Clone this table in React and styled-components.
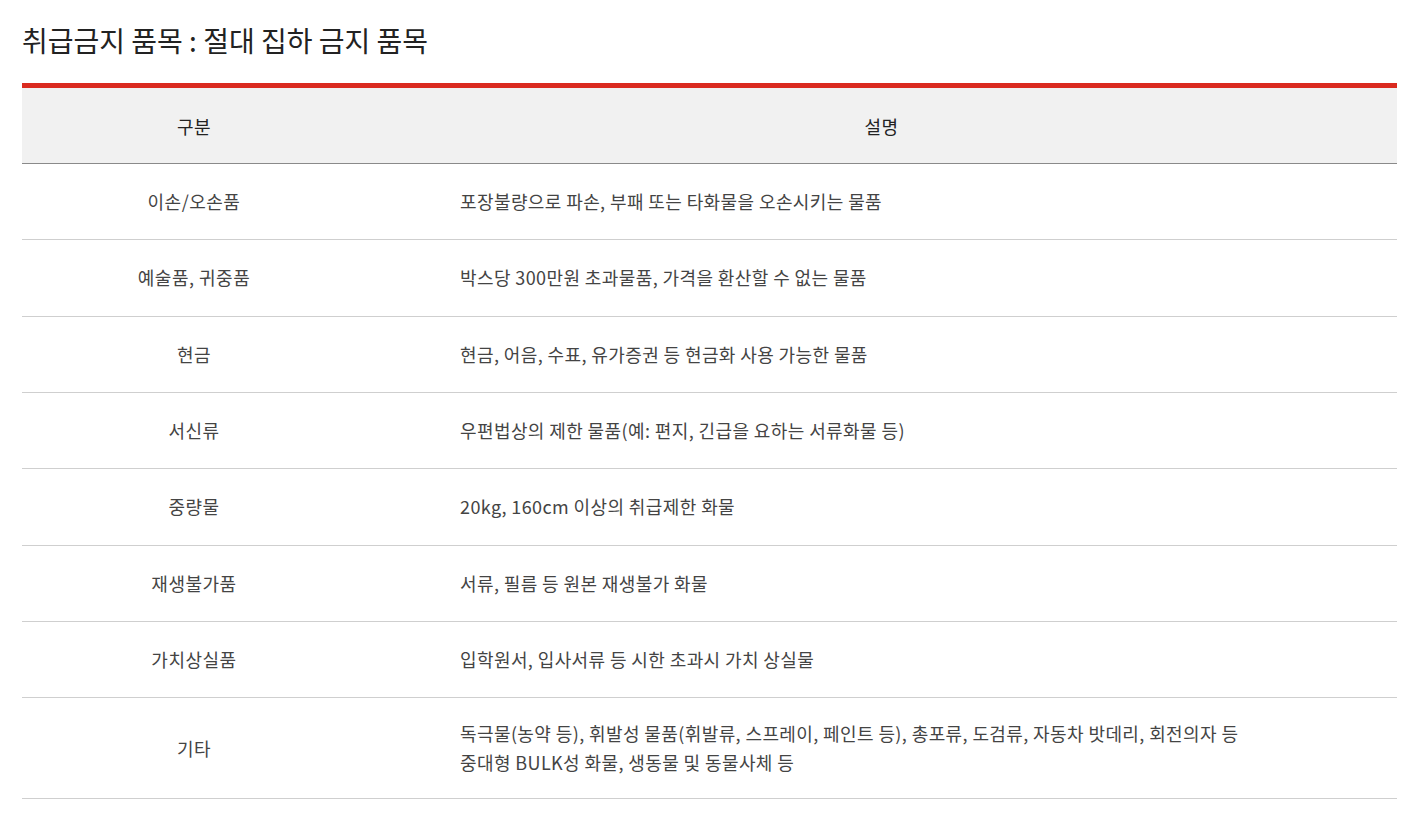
import React from 'react';
import styled, { createGlobalStyle } from 'styled-components';

const rows = [
  { name: '이손/오손품', desc: ['포장불량으로 파손, 부패 또는 타화물을 오손시키는 물품'] },
  { name: '예술품, 귀중품', desc: ['박스당 300만원 초과물품, 가격을 환산할 수 없는 물품'] },
  { name: '현금', desc: ['현금, 어음, 수표, 유가증권 등 현금화 사용 가능한 물품'] },
  { name: '서신류', desc: ['우편법상의 제한 물품(예: 편지, 긴급을 요하는 서류화물 등)'] },
  { name: '중량물', desc: ['20kg, 160cm 이상의 취급제한 화물'] },
  { name: '재생불가품', desc: ['서류, 필름 등 원본 재생불가 화물'] },
  { name: '가치상실품', desc: ['입학원서, 입사서류 등 시한 초과시 가치 상실물'] },
  {
    name: '기타',
    desc: [
      '독극물(농약 등), 휘발성 물품(휘발류, 스프레이, 페인트 등), 총포류, 도검류, 자동차 밧데리, 회전의자 등',
      '중대형 BULK성 화물, 생동물 및 동물사체 등',
    ],
  },
];

const App = () => {
  return (
    <>
      <GlobalStyle />
      <Wrapper>
        <Title>취급금지 품목 : 절대 집하 금지 품목</Title>
        <Table>
          <colgroup>
            <col style={{ width: '344px' }} />
            <col />
          </colgroup>
          <thead>
            <tr>
              <HeadCell>구분</HeadCell>
              <HeadCell>설명</HeadCell>
            </tr>
          </thead>
          <tbody>
            {rows.map((row) => (
              <tr key={row.name}>
                <NameCell>{row.name}</NameCell>
                <DescCell>
                  {row.desc.map((line, i) => (
                    <React.Fragment key={i}>
                      {i > 0 && <br />}
                      {line}
                    </React.Fragment>
                  ))}
                </DescCell>
              </tr>
            ))}
          </tbody>
        </Table>
      </Wrapper>
    </>
  );
};

const GlobalStyle = createGlobalStyle`
  * {
    box-sizing: border-box;
  }
  body {
    margin: 0;
    background: #fff;
    font-family: 'Noto Sans CJK KR', 'Noto Sans', sans-serif;
  }
`;

const Wrapper = styled.div`
  width: 1375px;
  margin-left: 22px;
  padding-top: 20px;
`;

const Title = styled.h2`
  margin: 0 0 23px;
  font-size: 28px;
  line-height: 40px;
  font-weight: 400;
  color: #222;
  letter-spacing: 0;
`;

const Table = styled.table`
  width: 100%;
  border-collapse: collapse;
  border-top: 5px solid #da2a1f;
  table-layout: fixed;
`;

const HeadCell = styled.th`
  height: 78px;
  background: #f1f1f1;
  border-bottom: 1px solid #8a8a8a;
  font-size: 18px;
  font-weight: 400;
  color: #222;
  text-align: center;
  letter-spacing: 0.5px;
  padding: 0;
`;

const NameCell = styled.td`
  height: 76.34px;
  border-bottom: 1px solid #cfcfcf;
  font-size: 18px;
  line-height: 29px;
  letter-spacing: 0.5px;
  color: #444;
  text-align: center;
  padding: 21px 0;
`;

const DescCell = styled.td`
  height: 76.34px;
  border-bottom: 1px solid #cfcfcf;
  font-size: 18px;
  line-height: 29px;
  letter-spacing: 0.4px;
  color: #444;
  text-align: left;
  padding: 21px 0 21px 94px;
`;

export default App;
